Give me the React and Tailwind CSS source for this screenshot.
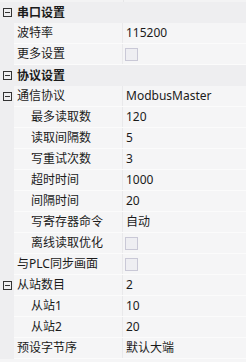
const rows = [
  { type: "cat", label: "串口设置" },
  { label: "波特率", value: "115200" },
  { label: "更多设置", check: true },
  { type: "cat", label: "协议设置" },
  { label: "通信协议", value: "ModbusMaster", expand: true },
  { label: "最多读取数", value: "120", indent: true },
  { label: "读取间隔数", value: "5", indent: true },
  { label: "写重试次数", value: "3", indent: true },
  { label: "超时时间", value: "1000", indent: true },
  { label: "间隔时间", value: "20", indent: true },
  { label: "写寄存器命令", value: "自动", indent: true },
  { label: "离线读取优化", check: true, indent: true },
  { label: "与PLC同步画面", check: true },
  { label: "从站数目", value: "2", expand: true },
  { label: "从站1", value: "10", indent: true },
  { label: "从站2", value: "20", indent: true },
  { label: "预设字节序", value: "默认大端" },
];

const Minus = () => (
  <svg width="9" height="9" viewBox="0 0 9 9" className="shrink-0">
    <rect x="0.5" y="0.5" width="8" height="8" fill="none" stroke="#333" strokeWidth="1" />
    <line x1="2" y1="4.5" x2="7" y2="4.5" stroke="#333" strokeWidth="1" />
  </svg>
);

export default function App() {
  return (
    <div
      className="w-[246px] h-[362px] overflow-hidden bg-[#f5f5f6] text-[12px] text-[#1b1b1b]"
      style={{ fontFamily: '"Noto Sans", "Noto Sans CJK SC", sans-serif' }}
    >
      <div className="flex h-[2px]">
        <div className="w-[123px] bg-[#f3f3f4]" />
        <div className="w-px bg-[#e6e6e8]" />
        <div className="flex-1 bg-[#f3f3f4]" />
      </div>
      {rows.map((r, i) => {
        if (r.type === "cat") {
          return (
            <div key={i} className="flex h-[21px] items-center bg-[#eeeef0]">
              <div className="flex w-[14px] justify-center pl-[1px]">
                <Minus />
              </div>
              <span className="pl-[3px] font-bold leading-none">{r.label}</span>
            </div>
          );
        }
        return (
          <div key={i} className="flex h-[21px]">
            <div className="flex w-[14px] items-center justify-center bg-[#eeeef0] pl-[1px]">
              {r.expand && <Minus />}
            </div>
            <div className="flex flex-1 border-b border-[#fbfbfb]">
              <div
                className={`flex w-[109px] items-center border-r border-[#e9e9eb] leading-none ${
                  r.indent ? "pl-[17px]" : "pl-[3px]"
                }`}
              >
                {r.label}
              </div>
              <div className="flex flex-1 items-center pl-[3px] leading-none">
                {r.check ? (
                  <span className="ml-[-1px] h-[13px] w-[13px] border border-[#c9c8d6] bg-[#eeeef2]" />
                ) : (
                  r.value
                )}
              </div>
            </div>
          </div>
        );
      })}
    </div>
  );
}
